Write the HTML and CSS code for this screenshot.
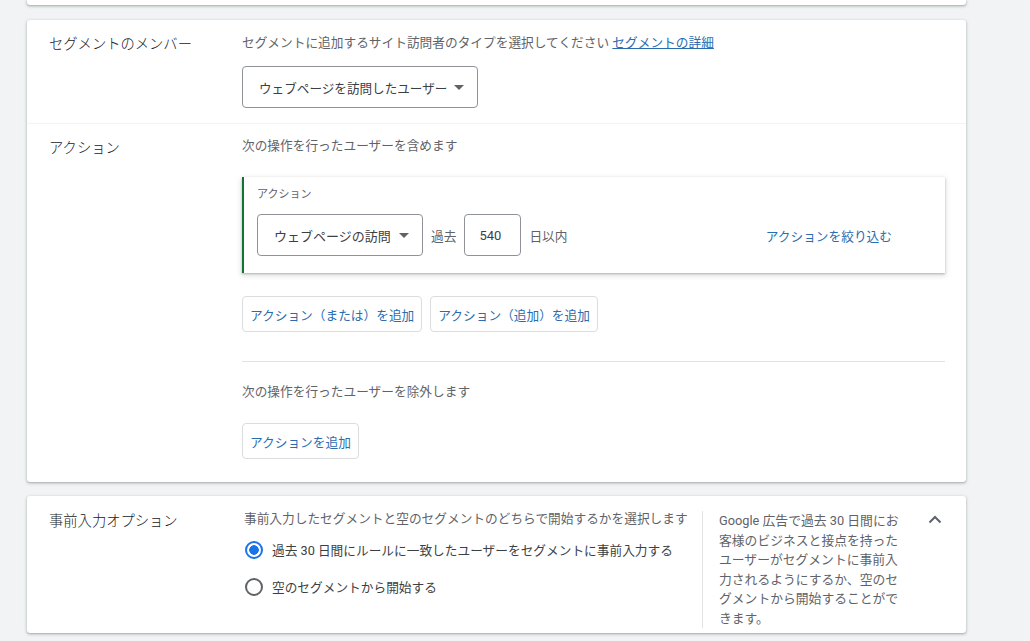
FILE: index.html
```html
<!DOCTYPE html>
<html lang="ja">
<head>
<meta charset="utf-8">
<title>セグメント</title>
<link rel="stylesheet" href="styles.css">
</head>
<body>
<div class="page">
	<div class="card card-stub"></div>

	<div class="card">
		<div class="row">
			<div class="row-label">セグメントのメンバー</div>
			<div class="row-body">
				<p class="hint">セグメントに追加するサイト訪問者のタイプを選択してください <a class="link link-under" href="#">セグメントの詳細</a></p>
				<div class="select select-wide">ウェブページを訪問したユーザー<span class="caret"></span></div>
			</div>
		</div>
		<div class="row row-split">
			<div class="row-label">アクション</div>
			<div class="row-body">
				<p class="hint">次の操作を行ったユーザーを含めます</p>
				<div class="action-box">
					<div class="action-title">アクション</div>
					<div class="action-line">
						<div class="select select-short">ウェブページの訪問<span class="caret"></span></div>
						<span class="word">過去</span>
						<div class="num-input">540</div>
						<span class="word">日以内</span>
						<a class="link refine" href="#">アクションを絞り込む</a>
					</div>
				</div>
				<div class="btn-row">
					<button class="btn">アクション（または）を追加</button>
					<button class="btn">アクション（追加）を追加</button>
				</div>
				<div class="rule"></div>
				<p class="hint hint-exclude">次の操作を行ったユーザーを除外します</p>
				<div class="btn-row btn-row-last">
					<button class="btn">アクションを追加</button>
				</div>
			</div>
		</div>
	</div>

	<div class="card">
		<div class="row row-prefill">
			<div class="row-label">事前入力オプション</div>
			<div class="prefill-body">
				<div class="prefill-main">
					<p class="hint">事前入力したセグメントと空のセグメントのどちらで開始するかを選択します</p>
					<label class="radio-row"><span class="radio radio-on"></span>過去 30 日間にルールに一致したユーザーをセグメントに事前入力する</label>
					<label class="radio-row"><span class="radio"></span>空のセグメントから開始する</label>
				</div>
				<div class="prefill-note">Google 広告で過去 30 日間にお客様のビジネスと接点を持ったユーザーがセグメントに事前入力されるようにするか、空のセグメントから開始することができます。</div>
				<svg class="chevron" width="14" height="9" viewBox="0 0 14 9"><path d="M1.5 7.5 L7 2 L12.5 7.5" fill="none" stroke="#5f6368" stroke-width="2"/></svg>
			</div>
		</div>
	</div>
</div>
</body>
</html>
```

FILE: styles.css
```css
* {
	margin:0;
	padding:0;
	box-sizing:border-box;
}
html, body {
	background:#f1f3f4;
	height:100%;
}
body {
	font-family:Roboto, "Noto Sans CJK JP", sans-serif;
	color:#202124;
	overflow:hidden;
}
.page {
	width:939px;
	margin-left:27px;
}
.card {
	background:#fff;
	border-radius:3px;
	box-shadow:0 1px 2px 0 rgba(60,64,67,.3), 0 1px 3px 1px rgba(60,64,67,.12);
	margin-bottom:14px;
}
.card-stub {
	height:5px;
	border-radius:0 0 3px 3px;
	margin-bottom:15px;
}
.row {
	display:grid;
	grid-template-columns:193px 1fr;
	padding:13px 21px 15px 22px;
}
.row-split {
	border-top:1px solid #f3f4f5;
	padding-top:12px;
	padding-bottom:23px;
}
.row-label {
	font-size:14.3px;
	font-weight:300;
	line-height:22px;
	margin-top:0;
}
.row-split .row-label,
.row-prefill .row-label {
	margin-top:1px;
}
.hint {
	font-size:12.7px;
	line-height:20px;
	color:#5f6368;
	white-space:nowrap;
}
.link {
	color:#2a6cb0;
	text-decoration:none;
}
.link-under {
	text-decoration:underline;
}
.select {
	display:flex;
	align-items:center;
	justify-content:space-between;
	height:42px;
	padding:0 13px 0 16px;
	border:1px solid #8f9296;
	border-radius:4px;
	font-size:13px;
	color:#3c4043;
}
.select-wide {
	width:236px;
	margin-top:13px;
	font-size:12.6px;
}
.select-short {
	width:166px;
}
.caret {
	width:0;
	height:0;
	border-left:5px solid transparent;
	border-right:5px solid transparent;
	border-top:5px solid #5f6368;
}
.action-box {
	margin-top:21px;
	border-left:2px solid #137333;
	padding:10px 0 17px 13px;
	box-shadow:0 1px 2px rgba(60,64,67,.3), 0 2px 5px 1px rgba(60,64,67,.15);
}
.action-title {
	font-size:11px;
	line-height:16px;
	color:#5f6368;
	margin-bottom:11px;
}
.action-line {
	display:flex;
	align-items:center;
	gap:8px;
}
.word {
	font-size:12.7px;
	color:#5f6368;
}
.num-input {
	width:57px;
	height:42px;
	border:1px solid #8f9296;
	border-radius:4px;
	padding-left:14px;
	display:flex;
	align-items:center;
	font-size:13px;
	color:#3c4043;
}
.refine {
	margin-left:auto;
	margin-right:53px;
	font-size:12.7px;
}
.btn-row {
	display:flex;
	gap:8px;
	margin-top:23px;
}
.btn-row-last {
	margin-top:21px;
}
.btn {
	height:36px;
	padding:0 7px;
	background:#fff;
	border:1px solid #dadce0;
	border-radius:4px;
	font-family:inherit;
	font-size:12.7px;
	color:#2a6cb0;
}
.rule {
	height:1px;
	background:#e0e2e4;
	margin-top:29px;
}
.hint-exclude {
	margin-top:20px;
}
.row-prefill {
	padding-bottom:5px;
}
.prefill-body {
	display:flex;
	align-items:flex-start;
}
.prefill-main {
	width:460px;
	padding-left:2px;
}
.radio-row {
	display:flex;
	align-items:center;
	height:37px;
	font-size:12.7px;
	color:#3c4043;
}
.radio-row:first-of-type {
	margin-top:2px;
}
.radio {
	width:18px;
	height:18px;
	border:2px solid #5f6368;
	border-radius:50%;
	margin:0 9px 0 1px;
	flex:none;
}
.radio-on {
	border-color:#1a73e8;
	background:radial-gradient(circle, #1a73e8 0 4.5px, #fff 5px);
}
.prefill-note {
	width:198px;
	margin-top:2px;
	padding-left:16px;
	border-left:1px solid #e0e2e4;
	font-size:12.8px;
	line-height:19.5px;
	color:#5f6368;
}
.chevron {
	margin-left:auto;
	margin-right:3px;
	margin-top:6px;
}
```
